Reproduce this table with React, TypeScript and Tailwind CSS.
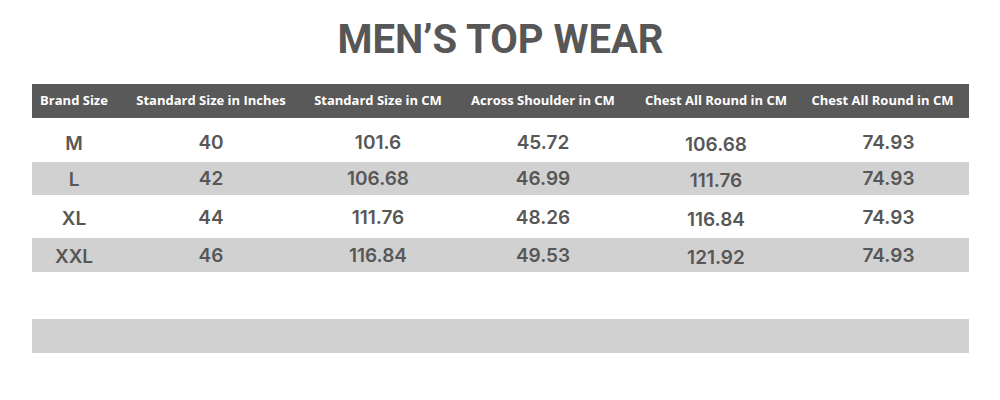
const headers = [
  'Brand Size',
  'Standard Size in Inches',
  'Standard Size in CM',
  'Across Shoulder in CM',
  'Chest All Round in CM',
  'Chest All Round in CM',
]

const rows = [
  { h: 'h-[44px]', pt: 'pt-[7px]', bg: 'bg-white', cells: ['M', '40', '101.6', '45.72', '106.68', '74.93'] },
  { h: 'h-[33px]', pt: 'pt-[1px]', bg: 'bg-[#d1d1d1]', cells: ['L', '42', '106.68', '46.99', '111.76', '74.93'] },
  { h: 'h-[43px]', pt: 'pt-[4px]', bg: 'bg-white', cells: ['XL', '44', '111.76', '48.26', '116.84', '74.93'] },
  { h: 'h-[34px]', pt: 'pt-[2px]', bg: 'bg-[#d1d1d1]', cells: ['XXL', '46', '116.84', '49.53', '121.92', '74.93'] },
]

const cols = 'grid grid-cols-[84px_190px_144px_186px_160px_173px]'

// the chest column sits a touch lower in the original
const cellClass = ['pt-[2px]', '', '', '', 'pt-[4px]', 'pl-[12px]']

export default function App() {
  return (
    <div
      className="h-[400px] w-[1000px] bg-white pl-[32px] text-[#575757]"
      style={{ fontFamily: 'Inter, "Liberation Sans", sans-serif' }}
    >
      <div className="w-[937px]">
        <h1
          className="pt-[16px] text-center text-[40px] leading-[48px] font-bold"
          style={{ fontFamily: 'Roboto, "Liberation Sans", sans-serif' }}
        >
          MEN’S TOP WEAR
        </h1>

        <div className="mt-[20px]">
          <div
            className={`${cols} h-[34px] items-center bg-[#595959] text-[13px] font-bold text-white`}
            style={{ fontFamily: '"Open Sans", sans-serif' }}
          >
            {headers.map((t, i) => (
              <div key={i} className="text-center whitespace-nowrap">
                {t}
              </div>
            ))}
          </div>

          {rows.map((r, i) => (
            <div key={i} className={`${cols} ${r.h} ${r.bg} items-center text-[19px] font-semibold`}>
              {r.cells.map((c, j) => (
                <div key={j} className={`${r.pt} text-center`}>
                  <div className={cellClass[j]}>{c}</div>
                </div>
              ))}
            </div>
          ))}

          <div className="h-[47px]" />
          <div className="h-[34px] bg-[#d1d1d1]" />
        </div>
      </div>
    </div>
  )
}
